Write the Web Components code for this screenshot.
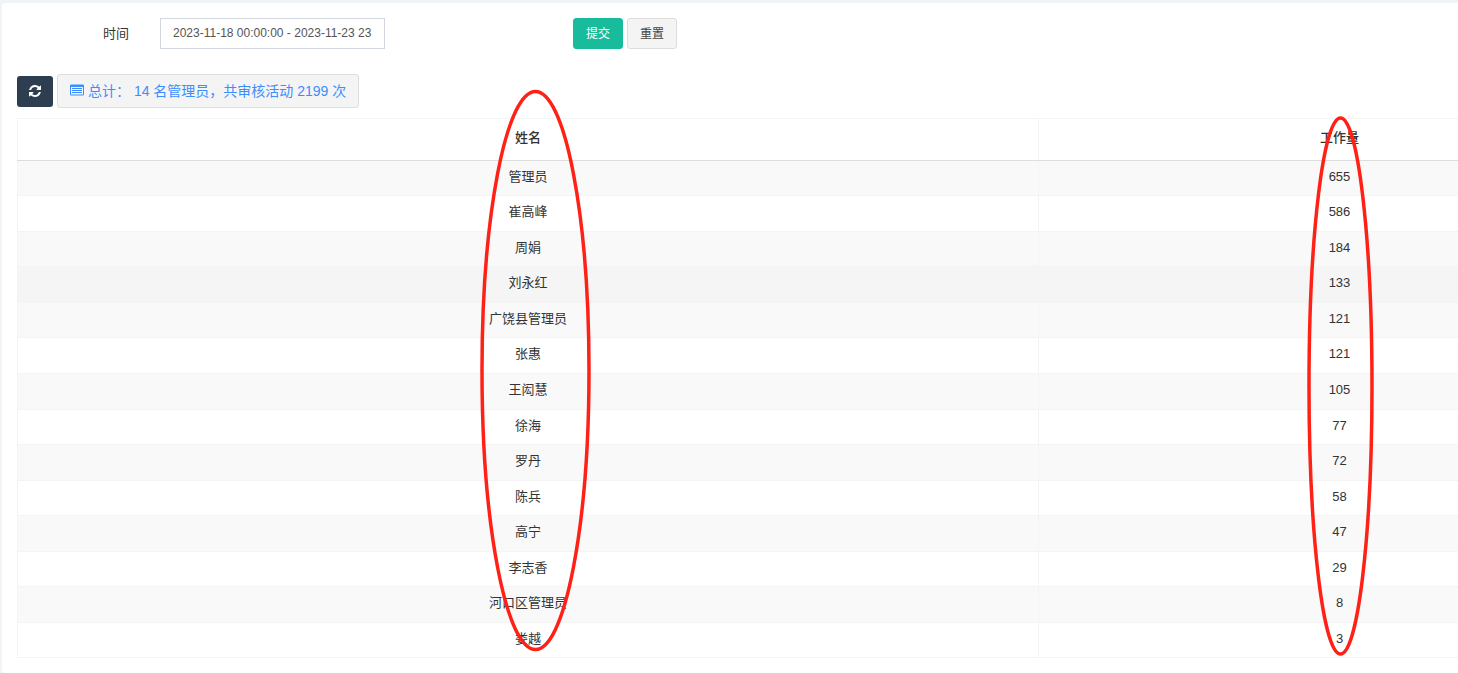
<!DOCTYPE html>
<html lang="zh">
<head>
<meta charset="utf-8">
<title>工作量统计</title>
<style>
    html, body { margin: 0; height: 100%; overflow: hidden; background: #f1f4f6; }
    body { font: 13px "Liberation Sans", "Noto Sans CJK SC", sans-serif; color: #333; }
</style>
</head>
<body>
<stats-page></stats-page>
<script>
class DateRangeForm extends HTMLElement {
    constructor() {
        super();
        this.shadowDOM = this.attachShadow({ mode: 'open' });
        this.shadowDOM.innerHTML = `
        <style>
            :host { display: flex; align-items: center; height: 31px; }
            label { width: 112px; text-align: right; margin-right: 31px; padding-bottom: 2px; }
            .range {
                box-sizing: border-box;
                width: 225px;
                height: 31px;
                line-height: 29px;
                padding: 0 12px;
                border: 1px solid #d2d6de;
                color: #555;
                font-size: 12px;
                white-space: nowrap;
                overflow: hidden;
            }
            .actions { display: flex; gap: 4px; margin-left: 188px; }
            button {
                box-sizing: border-box;
                width: 50px;
                height: 31px;
                padding: 0 0 2px;
                border-radius: 3px;
                font: inherit;
                font-size: 12px;
            }
            .submit { background: #18bc9c; border: 1px solid #18bc9c; color: #fff; }
            .reset { background: #f4f4f4; border: 1px solid #ddd; color: #444; }
        </style>
        <label>时间</label>
        <div class="range">2023-11-18 00:00:00 - 2023-11-23 23</div>
        <div class="actions">
            <button class="submit">提交</button>
            <button class="reset">重置</button>
        </div>
        `;
    }
}
customElements.define('date-range-form', DateRangeForm);

class StatsToolbar extends HTMLElement {
    constructor() {
        super();
        this.shadowDOM = this.attachShadow({ mode: 'open' });
        this.shadowDOM.innerHTML = `
        <style>
            :host { display: flex; align-items: center; gap: 4px; height: 34px; }
            .refresh {
                box-sizing: border-box;
                display: flex;
                align-items: center;
                justify-content: center;
                width: 36px;
                height: 31px;
                margin-top: 1px;
                padding-bottom: 2px;
                background: #2c3e50;
                border-radius: 3px;
            }
            .refresh svg { width: 12px; height: 14px; fill: #fff; }
            .info {
                box-sizing: border-box;
                display: flex;
                align-items: center;
                gap: 4px;
                width: 302px;
                height: 34px;
                padding: 0 12px 2px;
                background: #f4f4f4;
                border: 1px solid #ddd;
                border-radius: 3px;
                color: #3c8dff;
                font-size: 14px;
                white-space: nowrap;
            }
            .info svg { width: 14px; height: 14px; fill: #3c8dff; flex: none; }
        </style>
        <div class="refresh">
            <svg viewBox="0 0 1536 1792"><path d="M1511 1056q0 5-1 7-64 268-268 434.5t-478 166.5q-146 0-282.5-55t-243.5-157l-129 129q-19 19-45 19t-45-19-19-45v-448q0-26 19-45t45-19h448q26 0 45 19t19 45-19 45l-137 137q71 66 161 102t187 36q134 0 250-65t186-179q11-17 53-117 8-23 30-23h192q13 0 22.5 9.5t9.5 22.5zm25-800v448q0 26-19 45t-45 19h-448q-26 0-45-19t-19-45 19-45l138-138q-148-137-349-137-134 0-250 65t-186 179q-11 17-53 117-8 23-30 23h-199q-13 0-22.5-9.5t-9.5-22.5v-7q65-268 270-434.5t480-166.5q146 0 284 55.5t245 156.5l130-129q19-19 45-19t45 19 19 45z"/></svg>
        </div>
        <div class="info">
            <svg viewBox="0 0 14 14"><path fill-rule="evenodd" d="M1 1.5h12a1 1 0 0 1 1 1v9a1 1 0 0 1-1 1H1a1 1 0 0 1-1-1v-9a1 1 0 0 1 1-1zM1 4v7.5h12V4zM2 5h10v1H2zM2 7h10v1H2zM2 9h10v1H2z"/></svg>
            <span>总计： 14 名管理员，共审核活动 2199 次</span>
        </div>
        `;
    }
}
customElements.define('stats-toolbar', StatsToolbar);

class WorkloadTable extends HTMLElement {
    constructor() {
        super();
        this.shadowDOM = this.attachShadow({ mode: 'open' });
    }

    set rows(rows) {
        this._rows = rows;
        this.render();
    }

    render() {
        this.shadowDOM.innerHTML = `
        <style>
            :host { display: block; width: 1624px; }
            table { width: 100%; table-layout: fixed; border-collapse: collapse; font-size: 13px; line-height: 1.42857; }
            col.name { width: 1021px; }
            th, td { padding: 7px 8px 9px; text-align: center; border: 1px solid #f4f4f4; color: #333; }
            th { padding: 10px 8px 12px; border-bottom: 1px solid #ddd; font-weight: 500; }
            tbody tr:nth-child(odd) { background: #f9f9f9; }
            tr.hover { background: #f5f5f5 !important; }
        </style>
        <table>
            <colgroup><col class="name"><col></colgroup>
            <thead><tr><th>姓名</th><th>工作量</th></tr></thead>
            <tbody></tbody>
        </table>
        `;
        const body = this.shadowDOM.querySelector('tbody');
        this._rows.forEach(([name, count], index) => {
            const row = document.createElement('tr');
            if (index === 3) row.className = 'hover';
            row.innerHTML = `<td>${name}</td><td>${count}</td>`;
            body.appendChild(row);
        });
    }
}
customElements.define('workload-table', WorkloadTable);

class StatsPage extends HTMLElement {
    constructor() {
        super();
        this.shadowDOM = this.attachShadow({ mode: 'open' });
        this.shadowDOM.innerHTML = `
        <style>
            :host {
                display: block;
                position: relative;
                box-sizing: border-box;
                height: 670px;
                margin: 3px 0 0 2px;
                padding: 15px 0 0 15px;
                background: #fff;
                border-radius: 3px 0 0 3px;
                overflow: hidden;
            }
            stats-toolbar { margin-top: 25px; }
            workload-table { margin-top: 10px; }
            /* hand drawn marks that lie over the table */
            .marks { position: absolute; left: -2px; top: -3px; pointer-events: none; }
            ellipse { fill: none; stroke: #ff2116; stroke-width: 3.5; }
        </style>
        <date-range-form></date-range-form>
        <stats-toolbar></stats-toolbar>
        <workload-table></workload-table>
        <svg class="marks" width="1458" height="673">
            <ellipse cx="535.5" cy="370.5" rx="53.5" ry="279"/>
            <ellipse cx="1340.5" cy="386" rx="31.5" ry="268"/>
        </svg>
        `;
        this.shadowDOM.querySelector('workload-table').rows = [
            ['管理员', 655], ['崔高峰', 586], ['周娟', 184], ['刘永红', 133],
            ['广饶县管理员', 121], ['张惠', 121], ['王闳慧', 105], ['徐海', 77],
            ['罗丹', 72], ['陈兵', 58], ['高宁', 47], ['李志香', 29],
            ['河口区管理员', 8], ['娄越', 3]
        ];
    }
}
customElements.define('stats-page', StatsPage);
</script>
</body>
</html>
